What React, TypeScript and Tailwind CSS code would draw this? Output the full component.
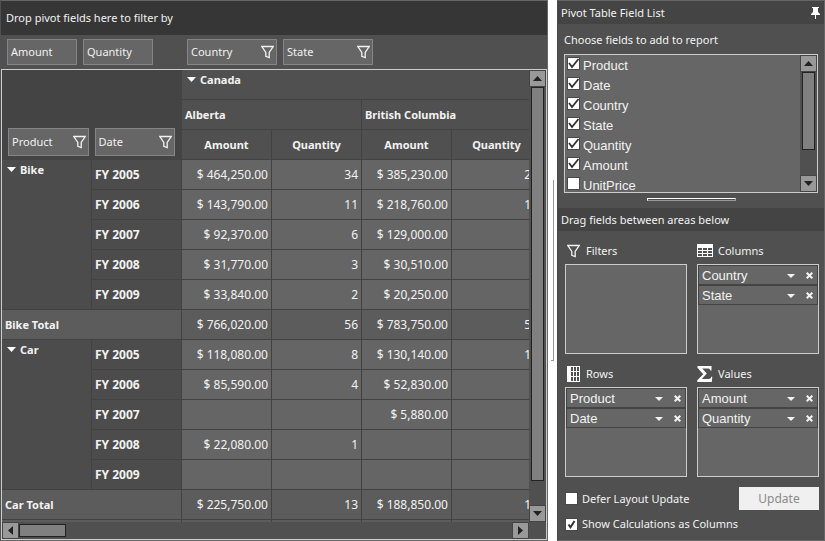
import type { ReactNode } from "react";

const ARIAL = "font-['Liberation_Sans',Arial,sans-serif]";

type Row = { year: string; values: string[] };
type Group = { name: string; rows: Row[]; total: string[] };

const groups: Group[] = [
  {
    name: "Bike",
    rows: [
      { year: "FY 2005", values: ["$ 464,250.00", "34", "$ 385,230.00", "28"] },
      { year: "FY 2006", values: ["$ 143,790.00", "11", "$ 218,760.00", "16"] },
      { year: "FY 2007", values: ["$ 92,370.00", "6", "$ 129,000.00", ""] },
      { year: "FY 2008", values: ["$ 31,770.00", "3", "$ 30,510.00", ""] },
      { year: "FY 2009", values: ["$ 33,840.00", "2", "$ 20,250.00", ""] },
    ],
    total: ["$ 766,020.00", "56", "$ 783,750.00", "57"],
  },
  {
    name: "Car",
    rows: [
      { year: "FY 2005", values: ["$ 118,080.00", "8", "$ 130,140.00", "10"] },
      { year: "FY 2006", values: ["$ 85,590.00", "4", "$ 52,830.00", ""] },
      { year: "FY 2007", values: ["", "", "$ 5,880.00", ""] },
      { year: "FY 2008", values: ["$ 22,080.00", "1", "", ""] },
      { year: "FY 2009", values: ["", "", "", ""] },
    ],
    total: ["$ 225,750.00", "13", "$ 188,850.00", "15"],
  },
];

const fields = [
  { name: "Product", checked: true },
  { name: "Date", checked: true },
  { name: "Country", checked: true },
  { name: "State", checked: true },
  { name: "Quantity", checked: true },
  { name: "Amount", checked: true },
  { name: "UnitPrice", checked: false },
];

function Funnel() {
  return (
    <svg width="13" height="14" viewBox="0 0 13 14" fill="none" stroke="#f2f2f2" strokeWidth="1.3" aria-hidden="true">
      <path d="M0.8 1.5 H12.2 L8.2 7.4 V12.6 L4.8 11.4 V7.4 Z" />
    </svg>
  );
}

function Expander({ label }: { label: string }) {
  return (
    <button type="button" aria-label={"Collapse " + label} className="flex h-4 items-center">
      <svg width="9" height="5" viewBox="0 0 9 5" fill="#fff" aria-hidden="true">
        <path d="M0 0H9L4.5 5Z" />
      </svg>
    </button>
  );
}

function Chip({ name, filter, size }: { name: string; filter?: boolean; size: string }) {
  return (
    <div className={"flex items-center justify-between border border-[#858585] bg-[#666] pr-[2px] pl-[3px] " + size}>
      <span>{name}</span>
      {filter && (
        <button type="button" aria-label={"Filter " + name}>
          <Funnel />
        </button>
      )}
    </div>
  );
}

function ArrowButton({ label, path }: { label: string; path: string }) {
  return (
    <button
      type="button"
      aria-label={label}
      className="flex size-[17px] shrink-0 items-center justify-center border border-[#444] bg-[#999]"
    >
      <svg width="9" height="9" viewBox="0 0 9 9" fill="#222" aria-hidden="true">
        <path d={path} />
      </svg>
    </button>
  );
}

const UP = "M0 7H9L4.5 2Z";
const DOWN = "M0 2H9L4.5 7Z";
const LEFT = "M7 0V9L2 4.5Z";
const RIGHT = "M2 0V9L7 4.5Z";

function VerticalScroll({ thumb }: { thumb: string }) {
  return (
    <div className="flex w-[17px] shrink-0 flex-col bg-[#505050]">
      <ArrowButton label="Scroll up" path={UP} />
      <div className="flex flex-1 flex-col px-[2px]">
        <div className={"border border-[#222] bg-[#808080] " + thumb} />
      </div>
      <ArrowButton label="Scroll down" path={DOWN} />
    </div>
  );
}

function CheckBox({ id, checked, bold }: { id: string; checked: boolean; bold?: boolean }) {
  return (
    <span className="grid size-[13px] shrink-0">
      <input
        id={id}
        type="checkbox"
        defaultChecked={checked}
        className="peer size-[13px] appearance-none border border-[#484848] bg-white [grid-area:1/1]"
      />
      <svg
        viewBox="0 0 13 13"
        fill="none"
        stroke="#333"
        strokeWidth={bold ? 2 : 1.8}
        className="pointer-events-none invisible size-[13px] [grid-area:1/1] peer-checked:visible"
        aria-hidden="true"
      >
        <path d={bold ? "M3.5 6.5L5.5 9.3L9.5 3" : "M2 6L5 10L11.5 2"} />
      </svg>
    </span>
  );
}

function PivotTable() {
  const head = "h-[30px] border-b border-[#424242] bg-[#505050] p-0 font-bold";
  const value = "h-[30px] border-r border-b border-[#424242] p-0 pr-[3px] text-right text-[12px]";
  return (
    <table className="w-[540px] table-fixed border-separate border-spacing-0">
      <thead>
        <tr>
          <td colSpan={2} rowSpan={3} className="w-[180px] border-r border-b border-[#444] bg-[#444] p-0 align-bottom">
            <div className="flex gap-[6px] px-[6px] pb-[3px]">
              <Chip name="Product" filter size="h-[28px] w-[81px]" />
              <Chip name="Date" filter size="h-[28px] w-[81px]" />
            </div>
          </td>
          <th colSpan={4} className={head + " text-left align-top"}>
            <div className="flex items-start gap-1 px-[5px] pt-[1px]">
              <Expander label="Canada" />
              <span>Canada</span>
            </div>
          </th>
        </tr>
        <tr>
          <th colSpan={2} className={head + " border-r pl-[3px] text-left"}>Alberta</th>
          <th colSpan={2} className={head + " border-r pl-[3px] text-left"}>British Columbia</th>
        </tr>
        <tr>
          {["Amount", "Quantity", "Amount", "Quantity"].map((name, i) => (
            <th key={i} className={head + " border-r text-center"}>{name}</th>
          ))}
        </tr>
      </thead>
      {groups.map((group) => (
        <tbody key={group.name}>
          {group.rows.map((row, i) => (
            <tr key={row.year}>
              {i === 0 && (
                <th rowSpan={5} className="border-r border-b border-[#424242] bg-[#4c4c4c] p-0 text-left align-top font-bold">
                  <div className="flex items-start gap-1 px-[5px] pt-[1px]">
                    <Expander label={group.name} />
                    <span>{group.name}</span>
                  </div>
                </th>
              )}
              <th className="h-[30px] border-r border-b border-[#424242] bg-[#4c4c4c] p-0 pl-[3px] text-left text-[12px] font-bold">
                {row.year}
              </th>
              {row.values.map((v, j) => (
                <td key={j} className={value + " bg-[#656565]"}>{v}</td>
              ))}
            </tr>
          ))}
          <tr>
            <th colSpan={2} className="h-[30px] border-r border-b border-[#424242] bg-[#5c5c5c] p-0 pl-[3px] text-left font-bold">
              {group.name} Total
            </th>
            {group.total.map((v, j) => (
              <td key={j} className={value + " bg-[#5c5c5c]"}>{v}</td>
            ))}
          </tr>
        </tbody>
      ))}
      <tfoot>
        <tr>
          <td colSpan={2} className="h-[2px] border-r border-[#424242] bg-[#5c5c5c] p-0" />
          {[0, 1, 2, 3].map((i) => (
            <td key={i} className="h-[2px] border-r border-[#424242] bg-[#5c5c5c] p-0" />
          ))}
        </tr>
      </tfoot>
    </table>
  );
}

function Area({ title, icon, items }: { title: string; icon: ReactNode; items: string[] }) {
  return (
    <section className="min-w-0 flex-1">
      <h3 className="flex h-[27px] items-center gap-[5px]">
        <span className="flex w-4 justify-center">{icon}</span>
        {title}
      </h3>
      <ul className={"h-[90px] border border-[#ccc] bg-[#666] text-[13px] " + ARIAL}>
        {items.map((item) => (
          <li key={item} className="flex h-5 items-center border border-[#444] pr-1 pl-[3px]">
            <span className="flex-1 pt-[2px]">{item}</span>
            <button type="button" aria-label={item + " options"} className="mr-[11px] pt-[2px]">
              <svg width="8" height="4" viewBox="0 0 8 4" fill="#f2f2f2" aria-hidden="true">
                <path d="M0 0H8L4 4Z" />
              </svg>
            </button>
            <button type="button" aria-label={"Remove " + item}>
              <svg width="7" height="7" viewBox="0 0 7 7" stroke="#f2f2f2" strokeWidth="2" aria-hidden="true">
                <path d="M0.7 0.7L6.3 6.3M6.3 0.7L0.7 6.3" />
              </svg>
            </button>
          </li>
        ))}
      </ul>
    </section>
  );
}

const columnsIcon = (
  <svg width="16" height="13" viewBox="0 0 16 13" aria-hidden="true" className="shrink-0">
    <path fill="#fff" fillRule="evenodd" d="M0 0H16V13H0ZM1 4V6H5V4ZM6 4V6H10V4ZM11 4V6H15V4ZM1 7V9H5V7ZM6 7V9H10V7ZM11 7V9H15V7ZM1 10V12H5V10ZM6 10V12H10V10ZM11 10V12H15V10Z" />
  </svg>
);

const rowsIcon = (
  <svg width="13" height="16" viewBox="0 0 13 16" aria-hidden="true">
    <path fill="#fff" fillRule="evenodd" d="M0 0H13V16H0ZM4 1V5H6V1ZM7 1V5H9V1ZM10 1V5H12V1ZM4 6V10H6V6ZM7 6V10H9V6ZM10 6V10H12V6ZM4 11V15H6V11ZM7 11V15H9V11ZM10 11V15H12V11Z" />
  </svg>
);

const sigmaIcon = (
  <svg width="16" height="16" viewBox="0 0 16 16" fill="#fff" aria-hidden="true" className="shrink-0">
    <path d="M0.5 0H14.5V4.5H13.3C13 3 12.3 2.4 10.8 2.4H5.2L9.8 7.6L4.8 13H11.6C13.2 13 13.9 12.2 14.3 10.8H15.3L14.8 16H0.3V14.3L6.2 8.2L0.5 1.7Z" />
  </svg>
);

function FieldList() {
  return (
    <aside className="flex w-[268px] shrink-0 flex-col border border-t-[#666] border-r-[#666] border-b-[#666] border-l-[#484848] bg-[#505050]">
      <header className="flex h-[23px] items-center justify-between bg-[#444] pr-1 pl-[3px]">
        <h2>Pivot Table Field List</h2>
        <button type="button" aria-label="Pin">
          <svg width="9" height="12" viewBox="0 0 9 12" fill="#fff" aria-hidden="true">
            <path d="M1 0H8V1H7V5L9 7V8H5V12H4V8H0V7L2 5V1H1Z" />
          </svg>
        </button>
      </header>
      <p className="px-[6px] pt-[7px] pb-[5px]">Choose fields to add to report</p>
      <div className="mx-[6px] flex h-[139px] border border-[#ccc] bg-[#666]">
        <ul className={"min-w-0 flex-1 overflow-hidden text-[13px] " + ARIAL}>
          {fields.map((f) => (
            <li key={f.name} className="flex h-5 items-start gap-[3px] px-[2px] pt-[2px]">
              <CheckBox id={"field-" + f.name} checked={f.checked} />
              <label htmlFor={"field-" + f.name} className="leading-[18px]">{f.name}</label>
            </li>
          ))}
        </ul>
        <VerticalScroll thumb="h-[78px]" />
      </div>
      <div className="mx-auto my-[5px] h-[3px] w-[89px] border border-t-white border-r-[#999] border-b-[#999] border-l-white" />
      <h2 className="mt-[2px] flex h-[23px] items-center bg-[#444] px-[3px]">Drag fields between areas below</h2>
      <div className="flex flex-col pt-[6px] pr-[5px] pl-[7px]">
        <div className="flex gap-[10px]">
          <Area title="Filters" icon={<Funnel />} items={[]} />
          <Area title="Columns" icon={columnsIcon} items={["Country", "State"]} />
        </div>
        <div className="mt-[6px] flex gap-[10px]">
          <Area title="Rows" icon={rowsIcon} items={["Product", "Date"]} />
          <Area title="Values" icon={sigmaIcon} items={["Amount", "Quantity"]} />
        </div>
        <div className="mt-[10px] flex items-center justify-between">
          <div className="flex items-center gap-1">
            <CheckBox id="defer" checked={false} />
            <label htmlFor="defer">Defer Layout Update</label>
          </div>
          <button type="button" disabled className="h-[23px] w-20 bg-[#f0f0f0] text-[12px] text-[#8a8a8a]">Update</button>
        </div>
        <div className="mt-[5px] flex items-center gap-1">
          <CheckBox id="calc" checked bold />
          <label htmlFor="calc">Show Calculations as Columns</label>
        </div>
      </div>
    </aside>
  );
}

export default function App() {
  return (
    <div className="flex min-h-screen bg-white font-['Noto_Sans','Segoe_UI',sans-serif] text-[11px] leading-[18px] text-[#f2f2f2]">
      <main className="flex min-w-0 flex-1 flex-col border border-l-[#505050] border-t-[#666] border-r-[#666] border-b-[#666] bg-[#505050]">
        <div className="flex h-[34px] items-center bg-[#363636] px-[5px]">Drop pivot fields here to filter by</div>
        <div className="flex h-[34px] items-center gap-[6px] px-[6px]">
          <Chip name="Amount" size="h-[26px] w-[70px]" />
          <Chip name="Quantity" size="mr-[28px] h-[26px] w-[70px]" />
          <Chip name="Country" filter size="h-[26px] w-[90px]" />
          <Chip name="State" filter size="h-[26px] w-[90px]" />
        </div>
        <div className="flex flex-1 flex-col border border-[#ccc]">
          <div className="flex">
            <div className="min-w-0 flex-1 overflow-hidden">
              <PivotTable />
            </div>
            <VerticalScroll thumb="h-[394px]" />
          </div>
          <div className="mr-[17px] flex">
            <ArrowButton label="Scroll left" path={LEFT} />
            <div className="flex flex-1 py-[2px]">
              <div className="w-[47px] border border-[#222] bg-[#808080]" />
            </div>
            <ArrowButton label="Scroll right" path={RIGHT} />
          </div>
        </div>
      </main>
      <div className="flex w-[9px] shrink-0 items-center justify-center">
        <div className="h-[181px] w-[3px] border-r border-b border-[#999]" />
      </div>
      <FieldList />
    </div>
  );
}
